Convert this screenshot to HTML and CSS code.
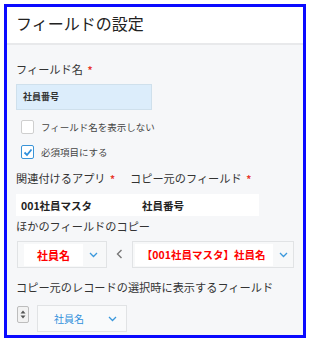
FILE: index.html
```
<!DOCTYPE html>
<html lang="ja">
<head>
    <meta charset="UTF-8">
    <meta name="viewport" content="width=device-width, initial-scale=1.0">
    <title>フィールドの設定</title>
    <link rel="stylesheet" href="styles.css">
</head>
<body>
    <div class="panel">
        <header class="panel-head">フィールドの設定</header>

        <div class="panel-body">
            <div class="field-label">フィールド名 <span class="req">*</span></div>
            <div class="name-input">社員番号</div>

            <label class="check-row">
                <span class="check-box"></span>
                <span class="check-text">フィールド名を表示しない</span>
            </label>
            <label class="check-row">
                <span class="check-box checked">
                    <svg width="10" height="9" viewBox="0 0 10 9"><polyline points="1.5,4.5 4,7 8.5,1.5" fill="none" stroke="#2f8fdc" stroke-width="1.8"/></svg>
                </span>
                <span class="check-text">必須項目にする</span>
            </label>

            <div class="field-label pair">
                <span class="pair-left">関連付けるアプリ <span class="req">*</span></span>
                <span>コピー元のフィールド <span class="req">*</span></span>
            </div>
            <div class="lookup-box">
                <span class="lookup-app">001社員マスタ</span>
                <span class="lookup-field">社員番号</span>
            </div>

            <div class="field-label copy-label">ほかのフィールドのコピー</div>
            <div class="copy-row">
                <div class="select sel-short">
                    <span class="select-value red">社員名</span>
                    <svg class="chev" width="9" height="6" viewBox="0 0 9 6"><polyline points="1,1 4.5,4.5 8,1" fill="none" stroke="#3a98dc" stroke-width="1.3"/></svg>
                </div>
                <span class="arrow">
                    <svg width="7" height="10" viewBox="0 0 7 10"><polyline points="5.5,1 1.5,5 5.5,9" fill="none" stroke="#777" stroke-width="1.4"/></svg>
                </span>
                <div class="select sel-long">
                    <span class="select-value red">【001社員マスタ】社員名</span>
                    <svg class="chev" width="9" height="6" viewBox="0 0 9 6"><polyline points="1,1 4.5,4.5 8,1" fill="none" stroke="#3a98dc" stroke-width="1.3"/></svg>
                </div>
            </div>

            <div class="field-label show-label">コピー元のレコードの選択時に表示するフィールド</div>
            <div class="show-row">
                <div class="spinner">
                    <svg width="6" height="9" viewBox="0 0 6 9"><polygon points="3,0.5 5.5,3.5 0.5,3.5" fill="#555"/><polygon points="0.5,5.5 5.5,5.5 3,8.5" fill="#555"/></svg>
                </div>
                <div class="select sel-plain">
                    <span class="plain-value">社員名</span>
                    <svg class="chev" width="9" height="6" viewBox="0 0 9 6"><polyline points="1,1 4.5,4.5 8,1" fill="none" stroke="#3a98dc" stroke-width="1.3"/></svg>
                </div>
            </div>
        </div>
    </div>
</body>
</html>
```

FILE: styles.css
```
body {
    margin: 4px;
    font-family: "Noto Sans CJK JP", "Noto Sans", sans-serif;
    color: #333;
    background: #fff;
}

.panel {
    width: 302px;
    height: 334px;
    box-sizing: border-box;
    border: 3px solid #0a0aff;
    background-color: #f6f7f9;
    overflow: hidden;
}

.panel-head {
    height: 36px;
    line-height: 32px;
    padding-left: 9px;
    font-size: 16px;
    color: #222;
    background: #fff;
    border-bottom: 2px solid #e8e9eb;
}

.panel-body {
    padding: 16px 9px 0 9px;
}

.field-label {
    font-size: 11.2px;
    line-height: 16px;
    height: 16px;
    color: #333;
    white-space: nowrap;
}

.req {
    margin-left: 2px;
    color: #e8372d;
    font-weight: bold;
    font-size: 10px;
}

.name-input {
    margin-top: 7px;
    width: 136px;
    height: 26px;
    box-sizing: border-box;
    padding-left: 6px;
    line-height: 24px;
    font-size: 9px;
    font-weight: bold;
    color: #333;
    background-color: #dcedfb;
    border: 1px solid #cfe0ec;
}

.check-row {
    display: flex;
    align-items: center;
    height: 14px;
    margin-top: 10px;
    padding-left: 5px;
}

.check-row + .check-row {
    margin-top: 11px;
}

.check-box {
    display: flex;
    align-items: center;
    justify-content: center;
    width: 13px;
    height: 14px;
    box-sizing: border-box;
    background: #fff;
    border: 1px solid #cfcfcf;
    border-radius: 2px;
}

.check-box.checked {
    border: 1.5px solid #3a94d8;
}

.check-text {
    margin-left: 7px;
    font-size: 9.5px;
    color: #444;
}

.pair {
    margin-top: 11px;
    display: flex;
}

.pair-left {
    width: 114px;
}

.lookup-box {
    margin-top: 8px;
    width: 243px;
    height: 22px;
    display: flex;
    align-items: center;
    background: #fff;
    font-size: 10.5px;
    font-weight: bold;
    color: #222;
}

.lookup-app {
    width: 121px;
    padding-left: 5px;
}

.copy-label {
    margin-top: 2px;
}

.copy-row {
    margin-top: 7px;
    display: flex;
    align-items: center;
    padding-left: 1px;
}

.select {
    height: 27px;
    box-sizing: border-box;
    display: flex;
    align-items: center;
    background: #f7f8f9;
    border: 1px solid #e1e3e5;
}

.select-value {
    height: 22px;
    line-height: 22px;
    background: #fff;
    font-size: 11px;
    font-weight: bold;
    text-align: center;
    white-space: nowrap;
}

.red {
    color: #f00;
}

.sel-short {
    width: 90px;
    padding-left: 6px;
}

.sel-short .select-value {
    width: 59px;
}

.sel-long {
    width: 163px;
    padding-left: 2px;
}

.sel-long .select-value {
    width: 138px;
    font-size: 10.5px;
}

.chev {
    margin-left: 6px;
}

.arrow {
    width: 25px;
    display: flex;
    justify-content: center;
    margin-top: -2px;
}

.show-label {
    margin-top: 11px;
}

.show-row {
    margin-top: 10px;
    display: flex;
    align-items: flex-start;
    padding-left: 1px;
}

.spinner {
    margin-top: 1px;
    width: 12px;
    height: 17px;
    box-sizing: border-box;
    display: flex;
    align-items: center;
    justify-content: center;
    background: #f2f2f2;
    border: 1px solid #bdbdbd;
    border-radius: 2px;
}

.sel-plain {
    margin-left: 8px;
    width: 90px;
    background: #f9fafb;
}

.plain-value {
    width: 62px;
    text-align: center;
    font-size: 10px;
    color: #2f8fdc;
}

.sel-plain .chev {
    margin-left: 8px;
}
```
